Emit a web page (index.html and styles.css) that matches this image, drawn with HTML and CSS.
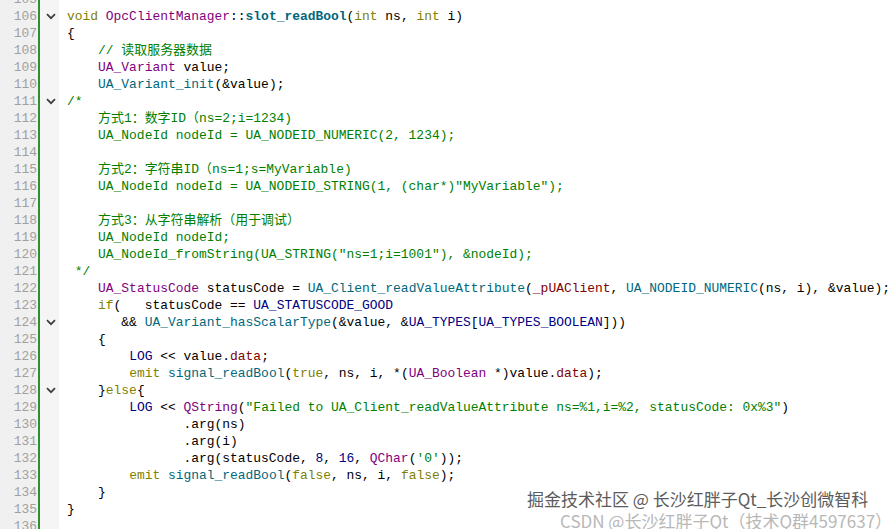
FILE: index.html
```html
<!DOCTYPE html>
<html>
<head>
<meta charset="utf-8">
<link rel="stylesheet" href="styles.css">
</head>
<body>
<div class="editor">
<div class="row"><span class="num">105</span><span class="fold"></span><span class="code"></span></div>
<div class="row"><span class="num">106</span><span class="fold"><svg class="chev" viewBox="0 0 10 7"><polyline points="1,1.2 5,5.2 9,1.2"/></svg></span><span class="code"><span class="k">void</span> <span class="t">OpcClientManager</span>::<span class="fb">slot_readBool</span>(<span class="k">int</span> ns, <span class="k">int</span> i)</span></div>
<div class="row"><span class="num">107</span><span class="fold"></span><span class="code">{</span></div>
<div class="row"><span class="num">108</span><span class="fold"></span><span class="code">    <span class="c">// 读取服务器数据</span></span></div>
<div class="row"><span class="num">109</span><span class="fold"></span><span class="code">    <span class="t">UA_Variant</span> value;</span></div>
<div class="row"><span class="num">110</span><span class="fold"></span><span class="code">    <span class="f">UA_Variant_init</span>(&amp;value);</span></div>
<div class="row"><span class="num">111</span><span class="fold"><svg class="chev" viewBox="0 0 10 7"><polyline points="1,1.2 5,5.2 9,1.2"/></svg></span><span class="code"><span class="c">/*</span></span></div>
<div class="row"><span class="num">112</span><span class="fold"></span><span class="code"><span class="c">    方式1：数字ID（ns=2;i=1234)</span></span></div>
<div class="row"><span class="num">113</span><span class="fold"></span><span class="code"><span class="c">    UA_NodeId nodeId = UA_NODEID_NUMERIC(2, 1234);</span></span></div>
<div class="row"><span class="num">114</span><span class="fold"></span><span class="code"></span></div>
<div class="row"><span class="num">115</span><span class="fold"></span><span class="code"><span class="c">    方式2：字符串ID（ns=1;s=MyVariable)</span></span></div>
<div class="row"><span class="num">116</span><span class="fold"></span><span class="code"><span class="c">    UA_NodeId nodeId = UA_NODEID_STRING(1, (char*)"MyVariable");</span></span></div>
<div class="row"><span class="num">117</span><span class="fold"></span><span class="code"></span></div>
<div class="row"><span class="num">118</span><span class="fold"></span><span class="code"><span class="c">    方式3：从字符串解析（用于调试）</span></span></div>
<div class="row"><span class="num">119</span><span class="fold"></span><span class="code"><span class="c">    UA_NodeId nodeId;</span></span></div>
<div class="row"><span class="num">120</span><span class="fold"></span><span class="code"><span class="c">    UA_NodeId_fromString(UA_STRING("ns=1;i=1001"), &amp;nodeId);</span></span></div>
<div class="row"><span class="num">121</span><span class="fold"></span><span class="code"><span class="c"> */</span></span></div>
<div class="row"><span class="num">122</span><span class="fold"></span><span class="code">    <span class="t">UA_StatusCode</span> statusCode = <span class="f">UA_Client_readValueAttribute</span>(<span class="d">_pUAClient</span>, <span class="f">UA_NODEID_NUMERIC</span>(ns, i), &amp;value);</span></div>
<div class="row"><span class="num">123</span><span class="fold"></span><span class="code">    <span class="k">if</span>(   statusCode == <span class="m">UA_STATUSCODE_GOOD</span></span></div>
<div class="row"><span class="num">124</span><span class="fold"><svg class="chev" viewBox="0 0 10 7"><polyline points="1,1.2 5,5.2 9,1.2"/></svg></span><span class="code">       &amp;&amp; <span class="f">UA_Variant_hasScalarType</span>(&amp;value, &amp;<span class="m">UA_TYPES</span>[<span class="m">UA_TYPES_BOOLEAN</span>]))</span></div>
<div class="row"><span class="num">125</span><span class="fold"></span><span class="code">    {</span></div>
<div class="row"><span class="num">126</span><span class="fold"></span><span class="code">        <span class="m">LOG</span> &lt;&lt; value.<span class="d">data</span>;</span></div>
<div class="row"><span class="num">127</span><span class="fold"></span><span class="code">        <span class="k">emit</span> <span class="f">signal_readBool</span>(<span class="k">true</span>, ns, i, *(<span class="t">UA_Boolean</span> *)value.<span class="d">data</span>);</span></div>
<div class="row"><span class="num">128</span><span class="fold"><svg class="chev" viewBox="0 0 10 7"><polyline points="1,1.2 5,5.2 9,1.2"/></svg></span><span class="code">    }<span class="k">else</span>{</span></div>
<div class="row"><span class="num">129</span><span class="fold"></span><span class="code">        <span class="m">LOG</span> &lt;&lt; <span class="t">QString</span>(<span class="s">"Failed to UA_Client_readValueAttribute ns=%1,i=%2, statusCode: 0x%3"</span>)</span></div>
<div class="row"><span class="num">130</span><span class="fold"></span><span class="code">               .arg(ns)</span></div>
<div class="row"><span class="num">131</span><span class="fold"></span><span class="code">               .arg(i)</span></div>
<div class="row"><span class="num">132</span><span class="fold"></span><span class="code">               .arg(statusCode, <span class="n">8</span>, <span class="n">16</span>, <span class="t">QChar</span>(<span class="s">'0'</span>));</span></div>
<div class="row"><span class="num">133</span><span class="fold"></span><span class="code">        <span class="k">emit</span> <span class="f">signal_readBool</span>(<span class="k">false</span>, ns, i, <span class="k">false</span>);</span></div>
<div class="row"><span class="num">134</span><span class="fold"></span><span class="code">    }</span></div>
<div class="row"><span class="num">135</span><span class="fold"></span><span class="code">}</span></div>
<div class="row"><span class="num">136</span><span class="fold"></span><span class="code"></span></div>
</div>
<div class="wm wm1">掘金技术社区 @ 长沙红胖子Qt_长沙创微智科</div>
<div class="wm wm2">CSDN @长沙红胖子Qt（技术Q群4597637）</div>
</body>
</html>
```

FILE: styles.css
```css
html, body {
  margin: 0;
  padding: 0;
  background: #ffffff;
  width: 894px;
  height: 529px;
  overflow: hidden;
  position: relative;
}

.editor {
  margin-top: -9px;
  display: flex;
  flex-direction: column;
  font-family: "Liberation Mono", "Noto Sans CJK SC", monospace;
  font-size: 12.95px;
  color: #000000;
}

.row {
  display: flex;
  height: 17px;
  line-height: 17px;
}

.num {
  width: 40px;
  flex: none;
  text-align: right;
  padding-right: 1px;
  box-sizing: border-box;
  background: #f0f0f0;
  color: #a0a0a0;
  border-right: 2px solid #2f8f2f;
}

.fold {
  width: 19px;
  flex: none;
  background: #f5f5f5;
  display: flex;
  align-items: center;
  padding-left: 6px;
  box-sizing: border-box;
}

.chev {
  width: 10px;
  height: 7px;
  fill: none;
  stroke: #3c3c3c;
  stroke-width: 1.7;
}

.code {
  padding-left: 8px;
  white-space: pre;
}

.k { color: #808000; }
.t { color: #800080; }
.f { color: #00677c; }
.fb { color: #00677c; font-weight: bold; }
.m { color: #000080; }
.d { color: #800000; }
.s { color: #008000; }
.c { color: #008000; }
.n { color: #000080; }

.wm {
  position: absolute;
  font-family: "Noto Sans CJK SC", "Noto Sans", sans-serif;
  font-size: 17px;
  white-space: nowrap;
  line-height: 20px;
}

.wm1 {
  left: 527px;
  top: 489px;
  color: #5c5c5c;
  text-shadow: 0 0 2px #ffffff, 0 0 2px #ffffff;
  z-index: 2;
}

.wm2 {
  left: 560px;
  top: 511px;
  color: #b8b8b8;
  z-index: 1;
}
```
